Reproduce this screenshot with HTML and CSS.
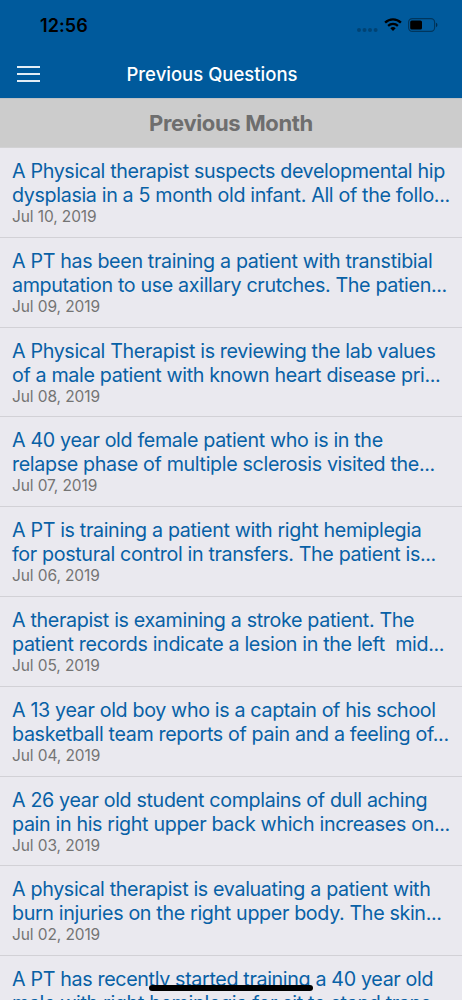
FILE: index.html
```html
<!DOCTYPE html>
<html lang="en">
<head>
    <meta charset="UTF-8">
    <meta name="viewport" content="width=device-width, initial-scale=1.0">
    <title>Previous Questions</title>
    <link rel="stylesheet" href="styles.css">
</head>
<body>
    <header class="header">
        <div class="status-bar">
            <span class="time">12:56</span>
            <div class="status-icons">
                <svg class="signal" width="22" height="4" viewBox="0 0 22 4">
                    <circle cx="2" cy="2" r="2"/>
                    <circle cx="7.5" cy="2" r="2"/>
                    <circle cx="13" cy="2" r="2"/>
                    <circle cx="18.6" cy="2" r="2"/>
                </svg>
                <svg class="wifi" width="18" height="13" viewBox="0 0 18 13">
                    <path d="M1.1 4.6a11.3 11.3 0 0 1 15.8 0" fill="none" stroke="#000" stroke-width="2.3"/>
                    <path d="M4.1 7.9a7 7 0 0 1 9.8 0" fill="none" stroke="#000" stroke-width="2.2"/>
                    <path d="M9 13L6.3 10.3a3.8 3.8 0 0 1 5.4 0z"/>
                </svg>
                <svg class="battery" width="30" height="14" viewBox="0 0 30 14">
                    <rect x="0.6" y="0.6" width="26" height="12.8" rx="3.6" fill="none" stroke="#000" stroke-opacity="0.4" stroke-width="1.2"/>
                    <rect x="2.2" y="2.4" width="11.8" height="9.2" rx="1.6"/>
                    <path d="M28 4.8v4.4a2.4 2.4 0 0 0 0-4.4z" fill-opacity="0.5"/>
                </svg>
            </div>
        </div>
        <nav class="nav-bar">
            <button class="menu" aria-label="Menu">
                <span></span>
                <span></span>
                <span></span>
            </button>
            <h1>Previous Questions</h1>
        </nav>
    </header>

    <h2 class="section-title">Previous Month</h2>

    <ul class="questions">
        <li>
            <p>A Physical therapist suspects developmental hip<br>dysplasia in a 5 month old infant. All of the follo...</p>
            <time>Jul 10, 2019</time>
        </li>
        <li>
            <p>A PT has been training a patient with transtibial<br>amputation to use axillary crutches. The patien...</p>
            <time>Jul 09, 2019</time>
        </li>
        <li>
            <p>A Physical Therapist is reviewing the lab values<br>of a male patient with known heart disease pri...</p>
            <time>Jul 08, 2019</time>
        </li>
        <li>
            <p>A 40 year old female patient who is in the<br>relapse phase of multiple sclerosis visited the...</p>
            <time>Jul 07, 2019</time>
        </li>
        <li>
            <p>A PT is training a patient with right hemiplegia<br>for postural control in transfers. The patient is...</p>
            <time>Jul 06, 2019</time>
        </li>
        <li>
            <p>A therapist is examining a stroke patient. The<br>patient records indicate a lesion in the left&nbsp; mid...</p>
            <time>Jul 05, 2019</time>
        </li>
        <li>
            <p>A 13 year old boy who is a captain of his school<br>basketball team reports of pain and a feeling of...</p>
            <time>Jul 04, 2019</time>
        </li>
        <li>
            <p>A 26 year old student complains of dull aching<br>pain in his right upper back which increases on...</p>
            <time>Jul 03, 2019</time>
        </li>
        <li>
            <p>A physical therapist is evaluating a patient with<br>burn injuries on the right upper body. The skin...</p>
            <time>Jul 02, 2019</time>
        </li>
        <li>
            <p>A PT has recently started training a 40 year old<br>male with right hemiplegia for sit to stand trans...</p>
        </li>
    </ul>

    <div class="home-indicator"></div>
</body>
</html>
```

FILE: styles.css
```css
* {
    box-sizing: border-box;
}
body {
    margin: 0;
    height: 1000px;
    overflow: hidden;
    background: #eae9ef;
    font-family: Inter, "Liberation Sans", sans-serif;
}
.header {
    height: 98px;
    background: #005a9c;
}
.status-bar {
    display: flex;
    justify-content: space-between;
    height: 50px;
    padding: 16px 24px 0 40px;
}
.time {
    font-size: 18px;
    font-weight: 600;
    line-height: 20px;
    letter-spacing: 0.1px;
    color: #000;
}
.status-icons {
    display: flex;
    align-items: flex-start;
    padding-top: 2px;
}
.signal {
    margin-top: 10px;
    opacity: 0.25;
}
.wifi {
    margin-left: 5px;
}
.battery {
    margin-left: 6px;
}
.nav-bar {
    display: grid;
    grid-template-columns: 56px 1fr;
    align-items: center;
    height: 48px;
    padding: 0 111px 0 17px;
}
.menu {
    display: flex;
    flex-direction: column;
    gap: 5px;
    width: 23px;
    padding: 0;
    border: none;
    background: none;
}
.menu span {
    width: 23px;
    height: 2px;
    background: #e3edf5;
}
h1 {
    margin: 0;
    padding-bottom: 1px;
    font-size: 18.5px;
    font-weight: 550;
    line-height: 24px;
    text-align: center;
    white-space: nowrap;
    color: #fff;
}
.section-title {
    height: 50px;
    margin: 0;
    border-top: 1px solid #bcc1c5;
    border-bottom: 1px solid #d2d2d4;
    background: #ccc;
    font-size: 22px;
    font-weight: 700;
    line-height: 49px;
    letter-spacing: -0.35px;
    text-align: center;
    color: #6e6e6e;
}
.questions {
    margin: 0;
    padding: 0;
    list-style: none;
}
.questions li {
    height: 89.8px;
    padding: 11px 0 0 12px;
    border-bottom: 1px solid #d2d1d6;
}
.questions p {
    margin: 0;
    font-size: 19.7px;
    line-height: 24px;
    letter-spacing: -0.35px;
    white-space: nowrap;
    color: #0861a6;
}
.questions time {
    display: block;
    font-size: 15.5px;
    line-height: 19px;
    letter-spacing: -0.1px;
    color: #747474;
}
.home-indicator {
    position: absolute;
    left: 149px;
    bottom: 9px;
    width: 164px;
    height: 6px;
    border-radius: 3px;
    background: #000;
}
```
